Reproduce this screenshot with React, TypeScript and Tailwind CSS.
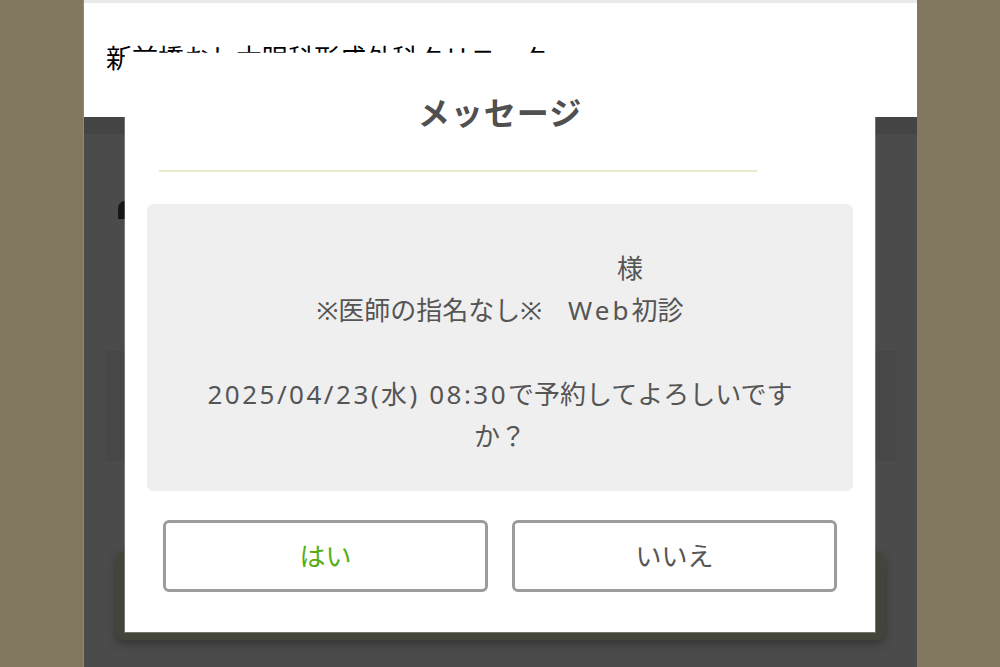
import React from 'react';

const font = { fontFamily: '"Noto Sans", "Noto Sans CJK JP", sans-serif' };

const ConfirmModal: React.FC = () => {
  return (
    <div className="absolute left-[41px] top-[53px] w-[750px] h-[579px] bg-white shadow-[0_0_0_1px_rgba(255,255,255,0.25)] flex flex-col items-center">
      <h2 className="mt-[40px] h-[40px] leading-[40px] text-[32px] font-bold text-[#505050] tracking-[1px]">メッセージ</h2>
      <div className="mt-[37px] h-[2px] w-[598px] bg-[#e3ecca] self-start ml-[34px]" />
      <div className="mt-[32px] w-[706px] h-[287px] rounded-md bg-[#efefef] pt-[43px] text-center text-[26px] leading-[42px] text-[#555555]">
        <p>{'　　　　　　　　　　様'}</p>
        <p>
          ※医師の指名なし※　<span className="tracking-[3px]">Web</span>初診
        </p>
        <p>&nbsp;</p>
        <p>
          <span className="tracking-[2.5px]">2025/04/23(水) 08:30</span>で予約してよろしいです
          <br />
          か？
        </p>
      </div>
      <div className="mt-[29px] flex gap-[24px]">
        <button className="w-[325px] h-[72px] rounded-md border-[3px] border-[#9c9c9c] bg-white text-[26px] text-[#58ad14]">
          はい
        </button>
        <button className="w-[325px] h-[72px] rounded-md border-[3px] border-[#9c9c9c] bg-white text-[26px] text-[#555555]">
          いいえ
        </button>
      </div>
    </div>
  );
};

const App: React.FC = () => {
  return (
    <div className="w-[1000px] h-[667px] flex bg-[#82775f] overflow-hidden" style={font}>
      <div className="w-[83px] shrink-0" />
      <div className="relative w-[834px] shrink-0 flex flex-col border-l border-[#8b8799]">
        {/* page behind the overlay */}
        <header className="h-[117px] bg-white border-t-[3px] border-[#e9e9e9]">
          <div className="pl-[22px] pt-[36px] text-[26px] text-black whitespace-nowrap">新前橋おし木眼科形成外科クリニック</div>
        </header>
        <div className="flex-1 bg-[#4b4b4b] flex flex-col">
          <div className="h-[17px] bg-[#444444]" />
          <div className="px-[21px] flex flex-col">
            <div className="mt-[67px] ml-[13px] w-[14px] h-[18px] bg-[#161616] rounded-tl-[7px]" />
            <div className="mt-[132px] h-[110px] bg-[#474747]" />
            <div className="mt-[91px] mx-[11px] h-[88px] rounded-lg bg-[#43453a] shadow-[0_4px_10px_rgba(0,0,0,0.3)]" />
          </div>
        </div>
        <ConfirmModal />
      </div>
      <div className="flex-1" />
    </div>
  );
};

export default App;
